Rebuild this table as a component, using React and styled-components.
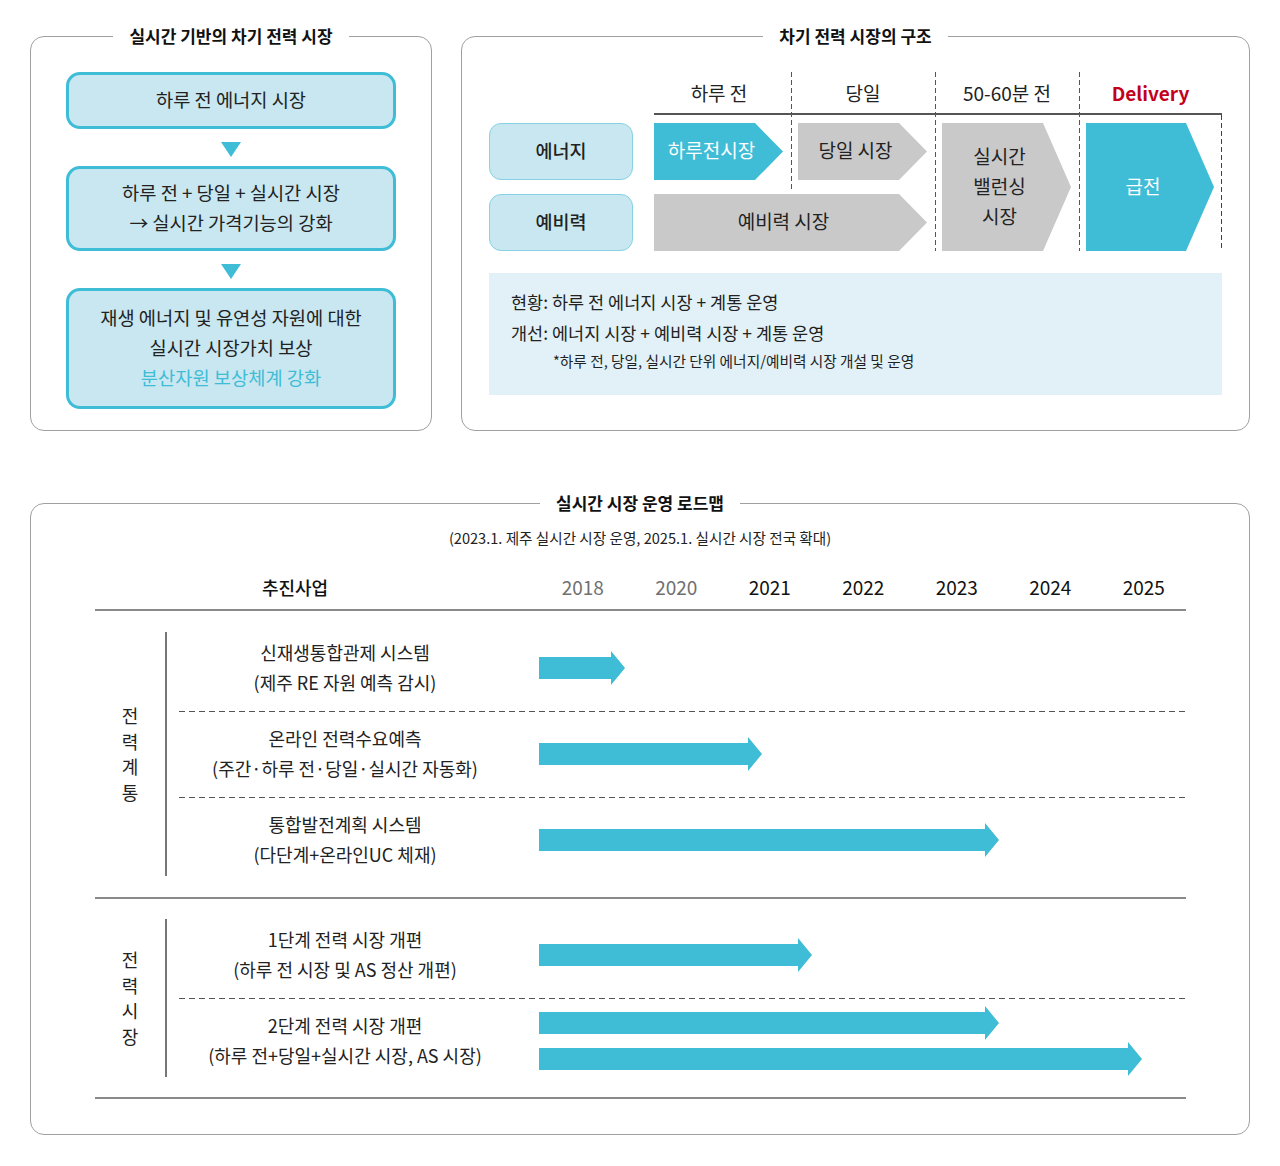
import React from "react";
import styled, { createGlobalStyle } from "styled-components";

const cyan = "#3fbcd6";
const pale = "#c8e7f0";
const gray = "#c9c9c9";
const rule = "#8a8a8a";

const GlobalStyle = createGlobalStyle`
  * { box-sizing: border-box; }
  body {
    margin: 0;
    background: #fff;
    color: #222;
    font-family: "Noto Sans CJK KR", "Noto Sans", sans-serif;
  }
`;

const Page = styled.div`
  width: 1280px;
  padding: 36px 30px 31px;
`;

const TopRow = styled.div`
  display: flex;
  gap: 29px;
`;

const Panel = styled.section`
  border: 1px solid #a0a0a0;
  border-radius: 14px;
  width: ${({ $w }) => ($w ? `${$w}px` : "auto")};
  height: ${({ $h }) => ($h ? `${$h}px` : "auto")};
  margin-top: ${({ $mt }) => $mt || 0}px;
  padding-bottom: ${({ $pb }) => $pb || 0}px;
`;

const PanelTitle = styled.h2`
  display: table;
  margin: -13px auto 0;
  padding: 0 16px;
  background: #fff;
  font-size: 17px;
  font-weight: 700;
  line-height: 24px;
  color: #111;
`;

/* left panel: flow of boxes */
const FlowCol = styled.div`
  display: flex;
  flex-direction: column;
  align-items: center;
  padding-top: 24px;
`;

const FlowBox = styled.div`
  width: 330px;
  height: ${({ $h }) => $h}px;
  padding-bottom: 4px;
  border: 3px solid ${cyan};
  border-radius: 14px;
  background: ${pale};
  display: flex;
  flex-direction: column;
  align-items: center;
  justify-content: center;
  font-size: 18.7px;
  line-height: 30px;
  color: #222;
`;

const Down = styled.div`
  width: 0;
  height: 0;
  border-left: 10px solid transparent;
  border-right: 10px solid transparent;
  border-top: 15px solid ${cyan};
  margin: 13px 0 9px;
`;

const Accent = styled.span`
  color: ${cyan};
`;

/* right panel: market structure */
const MarketGrid = styled.div`
  display: grid;
  grid-template-columns: 144px 14px 144px 144px 144px 143px;
  grid-template-rows: 43px 8px 57px 14px 57px;
  margin: 24px 27px 0 27px;
`;

const ColHead = styled.div`
  grid-row: 1;
  grid-column: ${({ $col }) => $col};
  display: flex;
  align-items: center;
  justify-content: center;
  padding-bottom: 2px;
  font-size: 19px;
  font-weight: ${({ $red }) => ($red ? 700 : 400)};
  color: ${({ $red }) => ($red ? "#c3001c" : "#222")};
`;

const HeadRule = styled.div`
  grid-row: 1;
  grid-column: 3 / 7;
  align-self: end;
  height: 2px;
  margin-left: 7px;
  background: #555;
`;

const VDash = styled.div`
  grid-column: ${({ $col }) => $col};
  grid-row: ${({ $rows }) => $rows};
  justify-self: ${({ $end }) => ($end ? "end" : "start")};
  width: 1px;
  margin-bottom: ${({ $mb }) => $mb || 0}px;
  background: repeating-linear-gradient(
    to bottom,
    ${({ $red }) => ($red ? "#d0021b" : "#555")} 0 5px,
    transparent 5px 8px
  );
`;

const Tag = styled.div`
  grid-column: 1;
  grid-row: ${({ $row }) => $row};
  display: flex;
  align-items: center;
  justify-content: center;
  padding-bottom: 3px;
  background: ${pale};
  border: 1px solid #86d2e4;
  border-radius: 12px;
  font-size: 18.5px;
  font-weight: 500;
  color: #222;
`;

const Chevron = styled.div`
  grid-column: ${({ $col }) => $col};
  grid-row: ${({ $row }) => $row};
  margin: 0 8px 0 7px;
  padding: 0 14px 3px 0;
  display: flex;
  flex-direction: column;
  align-items: center;
  justify-content: center;
  background: ${({ $tone }) => ($tone === "cyan" ? cyan : gray)};
  color: ${({ $tone }) => ($tone === "cyan" ? "#fff" : "#222")};
  clip-path: polygon(
    0 0,
    calc(100% - 28px) 0,
    100% 50%,
    calc(100% - 28px) 100%,
    0 100%
  );
  font-size: 19px;
  line-height: 30px;
`;

const Note = styled.div`
  margin: 22px 27px 0 27px;
  height: 122px;
  background: #e1f1f7;
  padding: 13px 22px 0;
  font-size: 17.5px;
  line-height: 31px;
  color: #222;
`;

const NoteSmall = styled.div`
  padding-left: 42px;
  font-size: 14.7px;
  line-height: 26px;
`;

/* bottom panel: roadmap */
const Subtitle = styled.p`
  margin: 13px 0 0;
  text-align: center;
  font-size: 14.6px;
  line-height: 20px;
  color: #222;
`;

const Table = styled.div`
  margin: 18px 63px 0 64px;
`;

const HeadRow = styled.div`
  display: grid;
  grid-template-columns: 400px 41px repeat(7, 93.5px);
  height: 45px;
  align-items: center;
  border-bottom: 2px solid ${rule};
  padding-bottom: 2px;
`;

const HeadLabel = styled.div`
  text-align: center;
  font-size: 18px;
  font-weight: 500;
  color: #111;
`;

const Year = styled.div`
  text-align: center;
  font-size: 19px;
  color: ${({ $past }) => ($past ? "#707070" : "#111")};
  grid-column: ${({ $i }) => $i + 3};
`;

const Group = styled.div`
  display: flex;
  border-bottom: 2px solid ${rule};
`;

const GroupLabel = styled.div`
  width: 72px;
  flex: none;
  margin: ${({ $m }) => $m}px 0;
  border-right: 2px solid #777;
  display: flex;
  flex-direction: column;
  align-items: center;
  justify-content: center;
  font-size: 18px;
  line-height: 25.5px;
  color: #222;
`;

const Rows = styled.div`
  flex: 1;
  margin-left: 12px;
  padding: ${({ $pad }) => $pad}px 0;
`;

const Row = styled.div`
  height: 86px;
  display: grid;
  grid-template-columns: 332px 1fr;
  column-gap: 28px;
  align-items: center;

  & + & {
    background: repeating-linear-gradient(
        to right,
        #555 0 6px,
        transparent 6px 10px
      )
      top left / 100% 1px no-repeat;
  }
`;

const RowText = styled.div`
  text-align: center;
  font-size: 18px;
  line-height: 30px;
  padding-bottom: 2px;
  color: #222;
`;

const ArrowStack = styled.div`
  display: flex;
  flex-direction: column;
  gap: 2px;
`;

const Arrow = styled.div`
  width: ${({ $w }) => $w}px;
  height: 34px;
  background: ${cyan};
  clip-path: polygon(
    0 6px,
    calc(100% - 14px) 6px,
    calc(100% - 14px) 0,
    100% 50%,
    calc(100% - 14px) 100%,
    calc(100% - 14px) 28px,
    0 28px
  );
`;

const years = ["2018", "2020", "2021", "2022", "2023", "2024", "2025"];

const groups = [
  {
    label: "전력계통",
    m: 21,
    pad: 14,
    rows: [
      { lines: ["신재생통합관제 시스템", "(제주 RE 자원 예측 감시)"], arrows: [86] },
      { lines: ["온라인 전력수요예측", "(주간·하루 전·당일·실시간 자동화)"], arrows: [223] },
      { lines: ["통합발전계획 시스템", "(다단계+온라인UC 체재)"], arrows: [460] },
    ],
  },
  {
    label: "전력시장",
    m: 20,
    pad: 13,
    rows: [
      { lines: ["1단계 전력 시장 개편", "(하루 전 시장 및 AS 정산 개편)"], arrows: [273] },
      { lines: ["2단계 전력 시장 개편", "(하루 전+당일+실시간 시장, AS 시장)"], arrows: [460, 603] },
    ],
  },
];

const App = () => {
  return (
    <>
      <GlobalStyle />
      <Page>
        <TopRow>
          <Panel $w={402} $h={395}>
            <PanelTitle>실시간 기반의 차기 전력 시장</PanelTitle>
            <FlowCol>
              <FlowBox $h={57}>하루 전 에너지 시장</FlowBox>
              <Down />
              <FlowBox $h={85}>
                <div>하루 전 + 당일 + 실시간 시장</div>
                <div>→ 실시간 가격기능의 강화</div>
              </FlowBox>
              <Down />
              <FlowBox $h={121}>
                <div>재생 에너지 및 유연성 자원에 대한</div>
                <div>실시간 시장가치 보상</div>
                <Accent>분산자원 보상체계 강화</Accent>
              </FlowBox>
            </FlowCol>
          </Panel>

          <Panel $w={789} $h={395}>
            <PanelTitle>차기 전력 시장의 구조</PanelTitle>
            <MarketGrid>
              <ColHead $col={3}>하루 전</ColHead>
              <ColHead $col={4}>당일</ColHead>
              <ColHead $col={5}>50-60분 전</ColHead>
              <ColHead $col={6} $red>
                Delivery
              </ColHead>
              <HeadRule />
              <VDash $col={4} $rows="1 / 5" $mb={2} />
              <VDash $col={5} $rows="1 / 6" />
              <VDash $col={6} $rows="1 / 6" />
              <VDash $col={6} $rows="2 / 6" $end $red />

              <Tag $row={3}>에너지</Tag>
              <Tag $row={5}>예비력</Tag>

              <Chevron $col={3} $row={3} $tone="cyan">
                하루전시장
              </Chevron>
              <Chevron $col={4} $row={3}>
                당일 시장
              </Chevron>
              <Chevron $col="3 / 5" $row={5}>
                예비력 시장
              </Chevron>
              <Chevron $col={5} $row="3 / 6">
                <div>실시간</div>
                <div>밸런싱</div>
                <div>시장</div>
              </Chevron>
              <Chevron $col={6} $row="3 / 6" $tone="cyan">
                급전
              </Chevron>
            </MarketGrid>
            <Note>
              <div>현황: 하루 전 에너지 시장 + 계통 운영</div>
              <div>개선: 에너지 시장 + 예비력 시장 + 계통 운영</div>
              <NoteSmall>*하루 전, 당일, 실시간 단위 에너지/예비력 시장 개설 및 운영</NoteSmall>
            </Note>
          </Panel>
        </TopRow>

        <Panel $mt={72} $pb={35}>
          <PanelTitle>실시간 시장 운영 로드맵</PanelTitle>
          <Subtitle>(2023.1. 제주 실시간 시장 운영, 2025.1. 실시간 시장 전국 확대)</Subtitle>
          <Table>
            <HeadRow>
              <HeadLabel>추진사업</HeadLabel>
              {years.map((y, i) => (
                <Year key={y} $i={i} $past={i < 2}>
                  {y}
                </Year>
              ))}
            </HeadRow>
            {groups.map((g) => (
              <Group key={g.label}>
                <GroupLabel $m={g.m}>
                  {g.label.split("").map((ch, i) => (
                    <span key={i}>{ch}</span>
                  ))}
                </GroupLabel>
                <Rows $pad={g.pad}>
                  {g.rows.map((r) => (
                    <Row key={r.lines[0]}>
                      <RowText>
                        <div>{r.lines[0]}</div>
                        <div>{r.lines[1]}</div>
                      </RowText>
                      <ArrowStack>
                        {r.arrows.map((w, i) => (
                          <Arrow key={i} $w={w} />
                        ))}
                      </ArrowStack>
                    </Row>
                  ))}
                </Rows>
              </Group>
            ))}
          </Table>
        </Panel>
      </Page>
    </>
  );
};

export default App;
